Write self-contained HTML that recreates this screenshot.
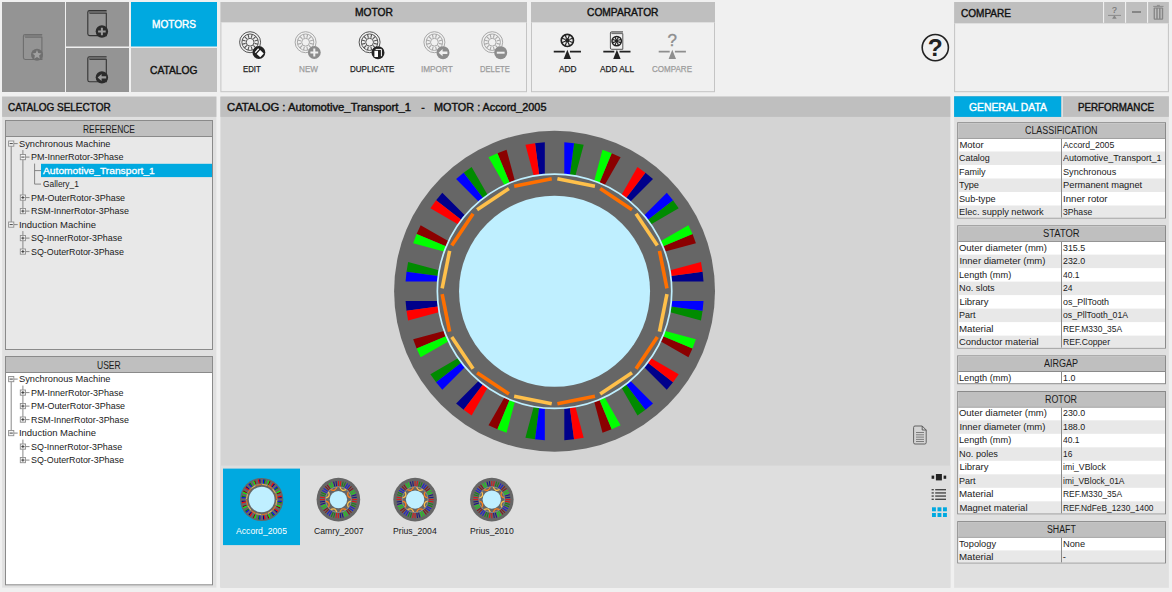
<!DOCTYPE html><html><head><meta charset="utf-8"><title>Motor Catalog</title><style>html,body{margin:0;padding:0}body{width:1172px;height:592px;overflow:hidden;position:relative;background:#f0f0f0;font-family:"Liberation Sans",sans-serif}body>div,body>span,body>svg{position:absolute;display:block;box-sizing:content-box}body>span{white-space:pre;transform-origin:0 0}</style></head><body>
<svg style="left:0;top:0" width="1172" height="592" viewBox="0 0 1172 592"><rect x="2" y="2" width="63" height="90" fill="#949494"/><rect x="66" y="2" width="63" height="44.5" fill="#949494"/><rect x="66" y="48" width="63" height="44" fill="#949494"/><rect x="131" y="2" width="86" height="44.5" fill="#00a9e0"/><rect x="131" y="48" width="86" height="44" fill="#bfbfbf"/><rect x="220.4" y="2" width="306.6" height="20.5" fill="#bfbfbf"/><rect x="220.4" y="22.5" width="306.6" height="69.7" fill="#c4c4c4"/><rect x="221.4" y="22.5" width="304.6" height="68.7" fill="#f0f0f0"/><rect x="531" y="2" width="184" height="20.5" fill="#bfbfbf"/><rect x="531" y="22.5" width="184" height="69.7" fill="#c4c4c4"/><rect x="532" y="22.5" width="182" height="68.7" fill="#f0f0f0"/><rect x="954.1" y="2" width="214.8" height="21.5" fill="#bfbfbf"/><rect x="954.1" y="23.5" width="214.8" height="68.7" fill="#c4c4c4"/><rect x="955.1" y="23.5" width="212.8" height="67.7" fill="#f0f0f0"/><rect x="1103" y="2" width="1.1" height="20.8" fill="#f0f0f0"/><rect x="1125" y="2" width="1.1" height="20.8" fill="#f0f0f0"/><rect x="1147" y="2" width="1.1" height="20.8" fill="#f0f0f0"/><rect x="2.1" y="96.6" width="214.3" height="491" fill="#e0e0e0"/><rect x="2.1" y="96.6" width="214.3" height="20.3" fill="#bfbfbf"/><rect x="5" y="120" width="208" height="230" fill="#8a8a8a"/><rect x="6" y="121" width="206" height="228" fill="#e8e8e8"/><rect x="6" y="121" width="206" height="15" fill="#bfbfbf"/><rect x="6" y="136" width="206" height="1" fill="#8a8a8a"/><rect x="5" y="356" width="208" height="229.3" fill="#8a8a8a"/><rect x="6" y="357" width="206" height="227.3" fill="#fff"/><rect x="6" y="357" width="206" height="15" fill="#bfbfbf"/><rect x="6" y="372" width="206" height="1" fill="#8a8a8a"/><rect x="41" y="163.8" width="171" height="13.3" fill="#00a9e0"/><rect x="220.4" y="96.6" width="729.9" height="491" fill="#d4d4d4"/><rect x="220.4" y="96.6" width="729.9" height="20.3" fill="#bfbfbf"/><rect x="220.4" y="465.6" width="729.9" height="122" fill="#dedede"/><rect x="223" y="468.6" width="77" height="76.5" fill="#00a9e0"/><rect x="954.1" y="96.3" width="214.8" height="491.5" fill="#e0e0e0"/><rect x="954.1" y="96.3" width="214.8" height="20.6" fill="#bfbfbf"/><rect x="954.1" y="96.3" width="107.3" height="20.6" fill="#00a9e0"/><rect x="1061.4" y="96.3" width="1.6" height="20.6" fill="#e0e0e0"/><rect x="957.2" y="122.2" width="208.8" height="96.3" fill="#8a8a8a"/><rect x="958.2" y="123.2" width="206.8" height="94.3" fill="#fff"/><rect x="958.2" y="151.5" width="206.8" height="13.5" fill="#e8e8e8"/><rect x="958.2" y="178.5" width="206.8" height="13.5" fill="#e8e8e8"/><rect x="958.2" y="205.5" width="206.8" height="12" fill="#e8e8e8"/><rect x="958.2" y="123.2" width="206.8" height="14.6" fill="#bfbfbf"/><rect x="958.2" y="137.8" width="206.8" height="1" fill="#8a8a8a"/><rect x="1061" y="138.8" width="1" height="78.7" fill="#8a8a8a"/><rect x="957.2" y="225.3" width="208.8" height="123.3" fill="#8a8a8a"/><rect x="958.2" y="226.3" width="206.8" height="121.3" fill="#fff"/><rect x="958.2" y="254.6" width="206.8" height="13.5" fill="#e8e8e8"/><rect x="958.2" y="281.6" width="206.8" height="13.5" fill="#e8e8e8"/><rect x="958.2" y="308.6" width="206.8" height="13.5" fill="#e8e8e8"/><rect x="958.2" y="335.6" width="206.8" height="12" fill="#e8e8e8"/><rect x="958.2" y="226.3" width="206.8" height="14.6" fill="#bfbfbf"/><rect x="958.2" y="240.9" width="206.8" height="1" fill="#8a8a8a"/><rect x="1061" y="241.9" width="1" height="105.7" fill="#8a8a8a"/><rect x="957.2" y="355.4" width="208.8" height="28.8" fill="#8a8a8a"/><rect x="958.2" y="356.4" width="206.8" height="26.8" fill="#fff"/><rect x="958.2" y="356.4" width="206.8" height="14.6" fill="#bfbfbf"/><rect x="958.2" y="371" width="206.8" height="1" fill="#8a8a8a"/><rect x="1061" y="372" width="1" height="11.2" fill="#8a8a8a"/><rect x="957.2" y="391" width="208.8" height="123.3" fill="#8a8a8a"/><rect x="958.2" y="392" width="206.8" height="121.3" fill="#fff"/><rect x="958.2" y="420.3" width="206.8" height="13.5" fill="#e8e8e8"/><rect x="958.2" y="447.3" width="206.8" height="13.5" fill="#e8e8e8"/><rect x="958.2" y="474.3" width="206.8" height="13.5" fill="#e8e8e8"/><rect x="958.2" y="501.3" width="206.8" height="12" fill="#e8e8e8"/><rect x="958.2" y="392" width="206.8" height="14.6" fill="#bfbfbf"/><rect x="958.2" y="406.6" width="206.8" height="1" fill="#8a8a8a"/><rect x="1061" y="407.6" width="1" height="105.7" fill="#8a8a8a"/><rect x="957.2" y="521.1" width="208.8" height="42.3" fill="#8a8a8a"/><rect x="958.2" y="522.1" width="206.8" height="40.3" fill="#fff"/><rect x="958.2" y="550.4" width="206.8" height="12" fill="#e8e8e8"/><rect x="958.2" y="522.1" width="206.8" height="14.6" fill="#bfbfbf"/><rect x="958.2" y="536.7" width="206.8" height="1" fill="#8a8a8a"/><rect x="1061" y="537.7" width="1" height="24.7" fill="#8a8a8a"/></svg>
<span style="left:151.90px;top:17.36px;font-size:10.5px;line-height:14px;color:#fff;transform:scaleX(0.9588);-webkit-text-stroke:0.4px #fff;">MOTORS</span>
<span style="left:150.00px;top:63.36px;font-size:10.5px;line-height:14px;color:#111;transform:scaleX(0.9770);-webkit-text-stroke:0.4px #111;">CATALOG</span>
<svg style="left:0;top:0" width="220" height="95" viewBox="0 0 220 95"><path d="M42.20 34.50 H25.10 Q23.40 34.50 23.40 36.20 V57.60 Q23.40 59.50 25.30 59.50 H41.90 V37.20 H25.10" fill="none" stroke="#6e6e6e" stroke-width="1.1"/><rect x="24.50" y="34.90" width="17.60" height="2.1" fill="#7d7d7d"/><circle cx="37" cy="54.8" r="6" fill="#6e6e6e"/><polygon points="37.00,50.10 38.29,53.12 41.57,53.42 39.09,55.58 39.82,58.78 37.00,57.10 34.18,58.78 34.91,55.58 32.43,53.42 35.71,53.12" fill="#a0a0a0"/><path d="M106.60 10.60 H89.50 Q87.80 10.60 87.80 12.30 V33.70 Q87.80 35.60 89.70 35.60 H106.30 V13.30 H89.50" fill="none" stroke="#333" stroke-width="1.1"/><rect x="88.90" y="11.00" width="17.60" height="2.1" fill="#666"/><circle cx="101.9" cy="31.5" r="6.2" fill="#2b2b2b"/><path d="M98.1 31.5 H105.7 M101.9 27.7 V35.3" stroke="#9a9a9a" stroke-width="2" fill="none"/><path d="M106.60 56.80 H89.50 Q87.80 56.80 87.80 58.50 V79.90 Q87.80 81.80 89.70 81.80 H106.30 V59.50 H89.50" fill="none" stroke="#333" stroke-width="1.1"/><rect x="88.90" y="57.20" width="17.60" height="2.1" fill="#666"/><circle cx="101.9" cy="77.4" r="6.2" fill="#2b2b2b"/><path d="M97.6 77.4 L101.6 73.9 V76.2 H106.2 V78.6 H101.6 V80.9 Z" fill="#9a9a9a"/></svg>
<span style="left:355.00px;top:5.36px;font-size:10.5px;line-height:14px;color:#111;transform:scaleX(0.9772);-webkit-text-stroke:0.4px #111;">MOTOR</span>
<span style="left:587.00px;top:5.36px;font-size:10.5px;line-height:14px;color:#111;transform:scaleX(0.9727);-webkit-text-stroke:0.4px #111;">COMPARATOR</span>
<span style="left:243.00px;top:61.88px;font-size:9px;line-height:14px;color:#222;transform:scaleX(0.8658);-webkit-text-stroke:0.25px #222;">EDIT</span>
<span style="left:298.75px;top:61.88px;font-size:9px;line-height:14px;color:#9c9c9c;transform:scaleX(0.9049);-webkit-text-stroke:0.25px #9c9c9c;">NEW</span>
<span style="left:350.00px;top:61.88px;font-size:9px;line-height:14px;color:#222;transform:scaleX(0.8908);-webkit-text-stroke:0.25px #222;">DUPLICATE</span>
<span style="left:421.25px;top:61.88px;font-size:9px;line-height:14px;color:#9c9c9c;transform:scaleX(0.9114);-webkit-text-stroke:0.25px #9c9c9c;">IMPORT</span>
<span style="left:480.00px;top:61.88px;font-size:9px;line-height:14px;color:#9c9c9c;transform:scaleX(0.8497);-webkit-text-stroke:0.25px #9c9c9c;">DELETE</span>
<span style="left:558.50px;top:61.88px;font-size:9px;line-height:14px;color:#222;transform:scaleX(0.9209);-webkit-text-stroke:0.25px #222;">ADD</span>
<span style="left:599.75px;top:61.88px;font-size:9px;line-height:14px;color:#222;transform:scaleX(0.9184);-webkit-text-stroke:0.25px #222;">ADD ALL</span>
<span style="left:652.00px;top:61.88px;font-size:9px;line-height:14px;color:#9c9c9c;transform:scaleX(0.8921);-webkit-text-stroke:0.25px #9c9c9c;">COMPARE</span>
<svg style="left:220px;top:22px" width="500" height="70" viewBox="220 22 500 70"><g fill="none" stroke="#555" stroke-width="1"><circle cx="250.1" cy="42.2" r="10.5"/><circle cx="250.1" cy="42.2" r="8.2"/><circle cx="250.1" cy="42.2" r="3.9"/><path d="M254.54 43.39 L258.02 44.32 M253.35 45.45 L255.90 48.00 M251.29 46.64 L252.22 50.12 M248.91 46.64 L247.98 50.12 M246.85 45.45 L244.30 48.00 M245.66 43.39 L242.18 44.32 M245.66 41.01 L242.18 40.08 M246.85 38.95 L244.30 36.40 M248.91 37.76 L247.98 34.28 M251.29 37.76 L252.22 34.28 M253.35 38.95 L255.90 36.40 M254.54 41.01 L258.02 40.08 " stroke-width="1.1"/></g><circle cx="258.9" cy="52.5" r="6.4" fill="#222"/><g transform="rotate(42 258.9 52.5)"><rect x="258.2" y="49.9" width="4.9" height="5.2" fill="#fff"/><rect x="255.6" y="49.9" width="1.3" height="5.2" fill="#fff"/></g><g fill="none" stroke="#a8a8a8" stroke-width="1"><circle cx="305.6" cy="42.2" r="10.5"/><circle cx="305.6" cy="42.2" r="8.2"/><circle cx="305.6" cy="42.2" r="3.9"/><path d="M310.04 43.39 L313.52 44.32 M308.85 45.45 L311.40 48.00 M306.79 46.64 L307.72 50.12 M304.41 46.64 L303.48 50.12 M302.35 45.45 L299.80 48.00 M301.16 43.39 L297.68 44.32 M301.16 41.01 L297.68 40.08 M302.35 38.95 L299.80 36.40 M304.41 37.76 L303.48 34.28 M306.79 37.76 L307.72 34.28 M308.85 38.95 L311.40 36.40 M310.04 41.01 L313.52 40.08 " stroke-width="1.1"/></g><circle cx="314.3" cy="52.5" r="6.4" fill="#8c8c8c"/><path d="M310.4 52.5 H318.2 M314.3 48.6 V56.4" stroke="#f0f0f0" stroke-width="2" fill="none"/><g fill="none" stroke="#555" stroke-width="1"><circle cx="369.6" cy="42.2" r="10.5"/><circle cx="369.6" cy="42.2" r="8.2"/><circle cx="369.6" cy="42.2" r="3.9"/><path d="M374.04 43.39 L377.52 44.32 M372.85 45.45 L375.40 48.00 M370.79 46.64 L371.72 50.12 M368.41 46.64 L367.48 50.12 M366.35 45.45 L363.80 48.00 M365.16 43.39 L361.68 44.32 M365.16 41.01 L361.68 40.08 M366.35 38.95 L363.80 36.40 M368.41 37.76 L367.48 34.28 M370.79 37.76 L371.72 34.28 M372.85 38.95 L375.40 36.40 M374.04 41.01 L377.52 40.08 " stroke-width="1.1"/></g><circle cx="378" cy="52.7" r="6.5" fill="#222"/><rect x="374.4" y="50.8" width="3.6" height="6.2" fill="#fff"/><path d="M375.6 49.4 H381.4 V56.2" stroke="#fff" stroke-width="1" fill="none"/><g fill="none" stroke="#a8a8a8" stroke-width="1"><circle cx="434.4" cy="42.2" r="10.5"/><circle cx="434.4" cy="42.2" r="8.2"/><circle cx="434.4" cy="42.2" r="3.9"/><path d="M438.84 43.39 L442.32 44.32 M437.65 45.45 L440.20 48.00 M435.59 46.64 L436.52 50.12 M433.21 46.64 L432.28 50.12 M431.15 45.45 L428.60 48.00 M429.96 43.39 L426.48 44.32 M429.96 41.01 L426.48 40.08 M431.15 38.95 L428.60 36.40 M433.21 37.76 L432.28 34.28 M435.59 37.76 L436.52 34.28 M437.65 38.95 L440.20 36.40 M438.84 41.01 L442.32 40.08 " stroke-width="1.1"/></g><circle cx="443" cy="52.7" r="6.5" fill="#8c8c8c"/><path d="M438.6 52.7 L442.6 49.1 V51.5 H447.4 V53.9 H442.6 V56.3 Z" fill="#f0f0f0"/><g fill="none" stroke="#a8a8a8" stroke-width="1"><circle cx="492.2" cy="42.2" r="10.5"/><circle cx="492.2" cy="42.2" r="8.2"/><circle cx="492.2" cy="42.2" r="3.9"/><path d="M496.64 43.39 L500.12 44.32 M495.45 45.45 L498.00 48.00 M493.39 46.64 L494.32 50.12 M491.01 46.64 L490.08 50.12 M488.95 45.45 L486.40 48.00 M487.76 43.39 L484.28 44.32 M487.76 41.01 L484.28 40.08 M488.95 38.95 L486.40 36.40 M491.01 37.76 L490.08 34.28 M493.39 37.76 L494.32 34.28 M495.45 38.95 L498.00 36.40 M496.64 41.01 L500.12 40.08 " stroke-width="1.1"/></g><circle cx="500.7" cy="52.7" r="6.5" fill="#8c8c8c"/><path d="M496.8 52.7 H504.6" stroke="#f0f0f0" stroke-width="2" fill="none"/><circle cx="567.35" cy="40.4" r="6.1" fill="none" stroke="#222" stroke-width="1.7"/><path d="M569.47 41.28 L572.99 42.73 M568.23 42.52 L569.68 46.04 M566.47 42.52 L565.02 46.04 M565.23 41.28 L561.71 42.73 M565.23 39.52 L561.71 38.07 M566.47 38.28 L565.02 34.76 M568.23 38.28 L569.68 34.76 M569.47 39.52 L572.99 38.07 " stroke="#222" stroke-width="1.15" fill="none"/><circle cx="567.35" cy="40.4" r="2.3" fill="#222"/><path d="M553.75 51.7 H564.75 M569.95 51.7 H580.95" stroke="#222" stroke-width="1.7" fill="none"/><path d="M567.35 49.8 L571.0500000000001 59 H563.65Z" fill="#222"/><path d="M623 31.8 H611.6 Q610.4 31.8 610.4 33 V48 Q610.4 49.3 611.7 49.3 H622.8 V33.6 H611.6" fill="none" stroke="#444" stroke-width="0.9"/><rect x="611" y="32.2" width="11.8" height="1.2" fill="#888"/><circle cx="616.7" cy="41.1" r="4.7" fill="none" stroke="#222" stroke-width="1.5"/><path d="M618.55 41.87 L621.04 42.90 M617.47 42.95 L618.50 45.44 M615.93 42.95 L614.90 45.44 M614.85 41.87 L612.36 42.90 M614.85 40.33 L612.36 39.30 M615.93 39.25 L614.90 36.76 M617.47 39.25 L618.50 36.76 M618.55 40.33 L621.04 39.30 " stroke="#222" stroke-width="1.15" fill="none"/><circle cx="616.7" cy="41.1" r="2.0" fill="#222"/><path d="M603.3 51.7 H614.3 M619.5 51.7 H630.5" stroke="#222" stroke-width="1.7" fill="none"/><path d="M616.9 49.8 L620.6 59 H613.1999999999999Z" fill="#222"/><path d="M658.6999999999999 51.7 H669.6999999999999 M674.9 51.7 H685.9" stroke="#8e8e8e" stroke-width="1.7" fill="none"/><path d="M672.3 49.8 L676.0 59 H668.5999999999999Z" fill="#8e8e8e"/></svg>
<span style="left:667.57px;top:34.41px;font-size:17px;line-height:14px;color:#8e8e8e;-webkit-text-stroke:0.35px #8e8e8e;">?</span>
<svg style="left:918px;top:30px" width="36" height="36" viewBox="918 30 36 36"><circle cx="935.3" cy="47.6" r="13.1" fill="none" stroke="#222" stroke-width="1.6"/></svg>
<span style="left:927.82px;top:40.91px;font-size:24.5px;line-height:14px;color:#222;font-weight:bold;">?</span>
<span style="left:960.60px;top:5.76px;font-size:10.5px;line-height:14px;color:#111;transform:scaleX(0.9558);-webkit-text-stroke:0.4px #111;">COMPARE</span>
<svg style="left:1100px;top:2px" width="70" height="22" viewBox="1100 2 70 22"><path d="M1108 15.4 H1121" stroke="#868686" stroke-width="0.9" fill="none"/><path d="M1114.4 15.2 L1116.7 18.8 H1112.1Z" fill="#868686"/><path d="M1132 12 H1141" stroke="#868686" stroke-width="2" fill="none"/><path d="M1153.2 6.4 H1163.5 M1156.9 5.4 H1159.8" stroke="#868686" stroke-width="0.9" fill="none"/><rect x="1153.6" y="7.6" width="9.6" height="12.1" rx="1" fill="#868686"/><rect x="1154.9499999999998" y="8.6" width="1.3" height="9.9" fill="#bfbfbf"/><rect x="1157.75" y="8.6" width="1.3" height="9.9" fill="#bfbfbf"/><rect x="1160.55" y="8.6" width="1.3" height="9.9" fill="#bfbfbf"/></svg>
<span style="left:1112.01px;top:3.32px;font-size:8.6px;line-height:14px;color:#777;-webkit-text-stroke:0.2px #777;">?</span>
<span style="left:8.00px;top:100.36px;font-size:10.5px;line-height:14px;color:#111;transform:scaleX(0.9505);-webkit-text-stroke:0.4px #111;">CATALOG SELECTOR</span>
<span style="left:83.00px;top:122.83px;font-size:10.3px;line-height:14px;color:#1a1a1a;transform:scaleX(0.8185);">REFERENCE</span>
<span style="left:97.25px;top:358.83px;font-size:10.3px;line-height:14px;color:#1a1a1a;transform:scaleX(0.8299);">USER</span>
<svg style="left:0;top:0" width="220" height="592" viewBox="0 0 220 592"><path d="M13.80 143.60 H17.70" stroke="#7a7a7a" stroke-width="0.9"/><path d="M25.50 157.10 H29.50" stroke="#7a7a7a" stroke-width="0.9"/><path d="M34.60 170.60 H41.00" stroke="#7a7a7a" stroke-width="0.9"/><path d="M34.60 184.10 H41.00" stroke="#7a7a7a" stroke-width="0.9"/><path d="M25.50 197.60 H29.50" stroke="#7a7a7a" stroke-width="0.9"/><path d="M25.50 211.10 H29.50" stroke="#7a7a7a" stroke-width="0.9"/><path d="M13.80 224.60 H17.70" stroke="#7a7a7a" stroke-width="0.9"/><path d="M25.50 238.10 H29.50" stroke="#7a7a7a" stroke-width="0.9"/><path d="M25.50 251.60 H29.50" stroke="#7a7a7a" stroke-width="0.9"/><path d="M11.2 143.60 V224.60" stroke="#7a7a7a" stroke-width="0.9"/><path d="M22.9 150.10 V211.10" stroke="#7a7a7a" stroke-width="0.9"/><path d="M22.9 231.10 V251.60" stroke="#7a7a7a" stroke-width="0.9"/><path d="M34.6 163.60 V184.10" stroke="#7a7a7a" stroke-width="0.9"/><rect x="8.60" y="141.00" width="5.2" height="5.2" fill="#f4f4f4" stroke="#8e8e8e" stroke-width="0.9"/><path d="M9.60 143.60 H12.80" stroke="#333" stroke-width="0.9"/><rect x="20.30" y="154.50" width="5.2" height="5.2" fill="#f4f4f4" stroke="#8e8e8e" stroke-width="0.9"/><path d="M21.30 157.10 H24.50" stroke="#333" stroke-width="0.9"/><rect x="20.30" y="195.00" width="5.2" height="5.2" fill="#f4f4f4" stroke="#8e8e8e" stroke-width="0.9"/><path d="M21.30 197.60 H24.50" stroke="#333" stroke-width="0.9"/><path d="M22.90 196.00 V199.20" stroke="#333" stroke-width="0.9"/><rect x="20.30" y="208.50" width="5.2" height="5.2" fill="#f4f4f4" stroke="#8e8e8e" stroke-width="0.9"/><path d="M21.30 211.10 H24.50" stroke="#333" stroke-width="0.9"/><path d="M22.90 209.50 V212.70" stroke="#333" stroke-width="0.9"/><rect x="8.60" y="222.00" width="5.2" height="5.2" fill="#f4f4f4" stroke="#8e8e8e" stroke-width="0.9"/><path d="M9.60 224.60 H12.80" stroke="#333" stroke-width="0.9"/><rect x="20.30" y="235.50" width="5.2" height="5.2" fill="#f4f4f4" stroke="#8e8e8e" stroke-width="0.9"/><path d="M21.30 238.10 H24.50" stroke="#333" stroke-width="0.9"/><path d="M22.90 236.50 V239.70" stroke="#333" stroke-width="0.9"/><rect x="20.30" y="249.00" width="5.2" height="5.2" fill="#f4f4f4" stroke="#8e8e8e" stroke-width="0.9"/><path d="M21.30 251.60 H24.50" stroke="#333" stroke-width="0.9"/><path d="M22.90 250.00 V253.20" stroke="#333" stroke-width="0.9"/></svg>
<span style="left:18.90px;top:136.51px;font-size:9.5px;line-height:14px;color:#1a1a1a;transform:scaleX(0.9734);">Synchronous Machine</span>
<span style="left:30.70px;top:150.01px;font-size:9.5px;line-height:14px;color:#1a1a1a;transform:scaleX(0.9469);">PM-InnerRotor-3Phase</span>
<span style="left:43.00px;top:163.51px;font-size:9.5px;line-height:14px;color:#fff;transform:scaleX(1.0783);-webkit-text-stroke:0.3px #fff;">Automotive_Transport_1</span>
<span style="left:43.00px;top:177.01px;font-size:9.5px;line-height:14px;color:#1a1a1a;transform:scaleX(0.8817);">Gallery_1</span>
<span style="left:30.70px;top:190.51px;font-size:9.5px;line-height:14px;color:#1a1a1a;transform:scaleX(0.9430);">PM-OuterRotor-3Phase</span>
<span style="left:30.70px;top:204.01px;font-size:9.5px;line-height:14px;color:#1a1a1a;transform:scaleX(0.9364);">RSM-InnerRotor-3Phase</span>
<span style="left:18.90px;top:217.51px;font-size:9.5px;line-height:14px;color:#1a1a1a;">Induction Machine</span>
<span style="left:30.70px;top:231.01px;font-size:9.5px;line-height:14px;color:#1a1a1a;transform:scaleX(0.9387);">SQ-InnerRotor-3Phase</span>
<span style="left:30.70px;top:244.51px;font-size:9.5px;line-height:14px;color:#1a1a1a;transform:scaleX(0.9359);">SQ-OuterRotor-3Phase</span>
<svg style="left:0;top:0" width="220" height="592" viewBox="0 0 220 592"><path d="M13.80 379.10 H17.70" stroke="#7a7a7a" stroke-width="0.9"/><path d="M25.50 392.60 H29.50" stroke="#7a7a7a" stroke-width="0.9"/><path d="M25.50 406.10 H29.50" stroke="#7a7a7a" stroke-width="0.9"/><path d="M25.50 419.60 H29.50" stroke="#7a7a7a" stroke-width="0.9"/><path d="M13.80 433.10 H17.70" stroke="#7a7a7a" stroke-width="0.9"/><path d="M25.50 446.60 H29.50" stroke="#7a7a7a" stroke-width="0.9"/><path d="M25.50 460.10 H29.50" stroke="#7a7a7a" stroke-width="0.9"/><path d="M11.2 379.10 V433.10" stroke="#7a7a7a" stroke-width="0.9"/><path d="M22.9 385.60 V419.60" stroke="#7a7a7a" stroke-width="0.9"/><path d="M22.9 439.60 V460.10" stroke="#7a7a7a" stroke-width="0.9"/><rect x="8.60" y="376.50" width="5.2" height="5.2" fill="#f4f4f4" stroke="#8e8e8e" stroke-width="0.9"/><path d="M9.60 379.10 H12.80" stroke="#333" stroke-width="0.9"/><rect x="20.30" y="390.00" width="5.2" height="5.2" fill="#f4f4f4" stroke="#8e8e8e" stroke-width="0.9"/><path d="M21.30 392.60 H24.50" stroke="#333" stroke-width="0.9"/><path d="M22.90 391.00 V394.20" stroke="#333" stroke-width="0.9"/><rect x="20.30" y="403.50" width="5.2" height="5.2" fill="#f4f4f4" stroke="#8e8e8e" stroke-width="0.9"/><path d="M21.30 406.10 H24.50" stroke="#333" stroke-width="0.9"/><path d="M22.90 404.50 V407.70" stroke="#333" stroke-width="0.9"/><rect x="20.30" y="417.00" width="5.2" height="5.2" fill="#f4f4f4" stroke="#8e8e8e" stroke-width="0.9"/><path d="M21.30 419.60 H24.50" stroke="#333" stroke-width="0.9"/><path d="M22.90 418.00 V421.20" stroke="#333" stroke-width="0.9"/><rect x="8.60" y="430.50" width="5.2" height="5.2" fill="#f4f4f4" stroke="#8e8e8e" stroke-width="0.9"/><path d="M9.60 433.10 H12.80" stroke="#333" stroke-width="0.9"/><rect x="20.30" y="444.00" width="5.2" height="5.2" fill="#f4f4f4" stroke="#8e8e8e" stroke-width="0.9"/><path d="M21.30 446.60 H24.50" stroke="#333" stroke-width="0.9"/><path d="M22.90 445.00 V448.20" stroke="#333" stroke-width="0.9"/><rect x="20.30" y="457.50" width="5.2" height="5.2" fill="#f4f4f4" stroke="#8e8e8e" stroke-width="0.9"/><path d="M21.30 460.10 H24.50" stroke="#333" stroke-width="0.9"/><path d="M22.90 458.50 V461.70" stroke="#333" stroke-width="0.9"/></svg>
<span style="left:18.90px;top:372.01px;font-size:9.5px;line-height:14px;color:#1a1a1a;transform:scaleX(0.9734);">Synchronous Machine</span>
<span style="left:30.70px;top:385.51px;font-size:9.5px;line-height:14px;color:#1a1a1a;transform:scaleX(0.9469);">PM-InnerRotor-3Phase</span>
<span style="left:30.70px;top:399.01px;font-size:9.5px;line-height:14px;color:#1a1a1a;transform:scaleX(0.9430);">PM-OuterRotor-3Phase</span>
<span style="left:30.70px;top:412.51px;font-size:9.5px;line-height:14px;color:#1a1a1a;transform:scaleX(0.9364);">RSM-InnerRotor-3Phase</span>
<span style="left:18.90px;top:426.01px;font-size:9.5px;line-height:14px;color:#1a1a1a;">Induction Machine</span>
<span style="left:30.70px;top:439.51px;font-size:9.5px;line-height:14px;color:#1a1a1a;transform:scaleX(0.9387);">SQ-InnerRotor-3Phase</span>
<span style="left:30.70px;top:453.01px;font-size:9.5px;line-height:14px;color:#1a1a1a;transform:scaleX(0.9359);">SQ-OuterRotor-3Phase</span>
<span style="left:227.00px;top:100.36px;font-size:10.5px;line-height:14px;color:#111;transform:scaleX(1.0736);-webkit-text-stroke:0.4px #111;">CATALOG : Automotive_Transport_1</span>
<span style="left:421.20px;top:100.36px;font-size:10.5px;line-height:14px;color:#111;-webkit-text-stroke:0.4px #111;">-</span>
<span style="left:434.40px;top:100.36px;font-size:10.5px;line-height:14px;color:#111;transform:scaleX(1.0318);-webkit-text-stroke:0.4px #111;">MOTOR : Accord_2005</span>
<svg style="left:380px;top:120px" width="350" height="345" viewBox="380 120 350 345"><circle cx="554.55" cy="291.25" r="160.45" fill="#666"/><polygon points="671.75,281.50 703.53,281.50 702.57,271.76 671.14,275.90" fill="#00008b"/><polygon points="671.14,275.90 702.57,271.76 700.98,262.11 670.28,270.34" fill="#ff0000"/><polygon points="665.23,251.50 695.93,243.27 692.49,234.12 663.20,246.25" fill="#8b0000"/><polygon points="663.20,246.25 692.49,234.12 688.45,225.20 660.92,241.10" fill="#00ff00"/><polygon points="651.17,224.21 678.70,208.32 673.00,200.36 647.85,219.66" fill="#008b00"/><polygon points="647.85,219.66 673.00,200.36 666.79,192.80 644.31,215.27" fill="#0000ff"/><polygon points="630.53,201.49 653.00,179.01 645.44,172.80 626.14,197.95" fill="#00008b"/><polygon points="626.14,197.95 645.44,172.80 637.48,167.10 621.59,194.63" fill="#ff0000"/><polygon points="604.70,184.88 620.60,157.35 611.68,153.31 599.55,182.60" fill="#8b0000"/><polygon points="599.55,182.60 611.68,153.31 602.53,149.87 594.30,180.57" fill="#00ff00"/><polygon points="575.46,175.52 583.69,144.82 574.04,143.23 569.90,174.66" fill="#008b00"/><polygon points="569.90,174.66 574.04,143.23 564.30,142.27 564.30,174.05" fill="#0000ff"/><polygon points="544.80,174.05 544.80,142.27 535.06,143.23 539.20,174.66" fill="#00008b"/><polygon points="539.20,174.66 535.06,143.23 525.41,144.82 533.64,175.52" fill="#ff0000"/><polygon points="514.80,180.57 506.57,149.87 497.42,153.31 509.55,182.60" fill="#8b0000"/><polygon points="509.55,182.60 497.42,153.31 488.50,157.35 504.40,184.88" fill="#00ff00"/><polygon points="487.51,194.63 471.62,167.10 463.66,172.80 482.96,197.95" fill="#008b00"/><polygon points="482.96,197.95 463.66,172.80 456.10,179.01 478.57,201.49" fill="#0000ff"/><polygon points="464.79,215.27 442.31,192.80 436.10,200.36 461.25,219.66" fill="#00008b"/><polygon points="461.25,219.66 436.10,200.36 430.40,208.32 457.93,224.21" fill="#ff0000"/><polygon points="448.18,241.10 420.65,225.20 416.61,234.12 445.90,246.25" fill="#8b0000"/><polygon points="445.90,246.25 416.61,234.12 413.17,243.27 443.87,251.50" fill="#00ff00"/><polygon points="438.82,270.34 408.12,262.11 406.53,271.76 437.96,275.90" fill="#008b00"/><polygon points="437.96,275.90 406.53,271.76 405.57,281.50 437.35,281.50" fill="#0000ff"/><polygon points="437.35,301.00 405.57,301.00 406.53,310.74 437.96,306.60" fill="#00008b"/><polygon points="437.96,306.60 406.53,310.74 408.12,320.39 438.82,312.16" fill="#ff0000"/><polygon points="443.87,331.00 413.17,339.23 416.61,348.38 445.90,336.25" fill="#8b0000"/><polygon points="445.90,336.25 416.61,348.38 420.65,357.30 448.18,341.40" fill="#00ff00"/><polygon points="457.93,358.29 430.40,374.18 436.10,382.14 461.25,362.84" fill="#008b00"/><polygon points="461.25,362.84 436.10,382.14 442.31,389.70 464.79,367.23" fill="#0000ff"/><polygon points="478.57,381.01 456.10,403.49 463.66,409.70 482.96,384.55" fill="#00008b"/><polygon points="482.96,384.55 463.66,409.70 471.62,415.40 487.51,387.87" fill="#ff0000"/><polygon points="504.40,397.62 488.50,425.15 497.42,429.19 509.55,399.90" fill="#8b0000"/><polygon points="509.55,399.90 497.42,429.19 506.57,432.63 514.80,401.93" fill="#00ff00"/><polygon points="533.64,406.98 525.41,437.68 535.06,439.27 539.20,407.84" fill="#008b00"/><polygon points="539.20,407.84 535.06,439.27 544.80,440.23 544.80,408.45" fill="#0000ff"/><polygon points="564.30,408.45 564.30,440.23 574.04,439.27 569.90,407.84" fill="#00008b"/><polygon points="569.90,407.84 574.04,439.27 583.69,437.68 575.46,406.98" fill="#ff0000"/><polygon points="594.30,401.93 602.53,432.63 611.68,429.19 599.55,399.90" fill="#8b0000"/><polygon points="599.55,399.90 611.68,429.19 620.60,425.15 604.70,397.62" fill="#00ff00"/><polygon points="621.59,387.87 637.48,415.40 645.44,409.70 626.14,384.55" fill="#008b00"/><polygon points="626.14,384.55 645.44,409.70 653.00,403.49 630.53,381.01" fill="#0000ff"/><polygon points="644.31,367.23 666.79,389.70 673.00,382.14 647.85,362.84" fill="#00008b"/><polygon points="647.85,362.84 673.00,382.14 678.70,374.18 651.17,358.29" fill="#ff0000"/><polygon points="660.92,341.40 688.45,357.30 692.49,348.38 663.20,336.25" fill="#8b0000"/><polygon points="663.20,336.25 692.49,348.38 695.93,339.23 665.23,331.00" fill="#00ff00"/><polygon points="670.28,312.16 700.98,320.39 702.57,310.74 671.14,306.60" fill="#008b00"/><polygon points="671.14,306.60 702.57,310.74 703.53,301.00 671.75,301.00" fill="#0000ff"/><circle cx="554.55" cy="291.25" r="117.20" fill="none" stroke="#bfefff" stroke-width="1.70"/><rect x="663.55" y="272.10" width="3.60" height="38.30" fill="#ff6f00" transform="rotate(-11.25 554.55 291.25)"/><rect x="663.55" y="272.10" width="3.60" height="38.30" fill="#ffc04a" transform="rotate(-33.75 554.55 291.25)"/><rect x="663.55" y="272.10" width="3.60" height="38.30" fill="#ff6f00" transform="rotate(-56.25 554.55 291.25)"/><rect x="663.55" y="272.10" width="3.60" height="38.30" fill="#ffc04a" transform="rotate(-78.75 554.55 291.25)"/><rect x="663.55" y="272.10" width="3.60" height="38.30" fill="#ff6f00" transform="rotate(-101.25 554.55 291.25)"/><rect x="663.55" y="272.10" width="3.60" height="38.30" fill="#ffc04a" transform="rotate(-123.75 554.55 291.25)"/><rect x="663.55" y="272.10" width="3.60" height="38.30" fill="#ff6f00" transform="rotate(-146.25 554.55 291.25)"/><rect x="663.55" y="272.10" width="3.60" height="38.30" fill="#ffc04a" transform="rotate(-168.75 554.55 291.25)"/><rect x="663.55" y="272.10" width="3.60" height="38.30" fill="#ff6f00" transform="rotate(-191.25 554.55 291.25)"/><rect x="663.55" y="272.10" width="3.60" height="38.30" fill="#ffc04a" transform="rotate(-213.75 554.55 291.25)"/><rect x="663.55" y="272.10" width="3.60" height="38.30" fill="#ff6f00" transform="rotate(-236.25 554.55 291.25)"/><rect x="663.55" y="272.10" width="3.60" height="38.30" fill="#ffc04a" transform="rotate(-258.75 554.55 291.25)"/><rect x="663.55" y="272.10" width="3.60" height="38.30" fill="#ff6f00" transform="rotate(-281.25 554.55 291.25)"/><rect x="663.55" y="272.10" width="3.60" height="38.30" fill="#ffc04a" transform="rotate(-303.75 554.55 291.25)"/><rect x="663.55" y="272.10" width="3.60" height="38.30" fill="#ff6f00" transform="rotate(-326.25 554.55 291.25)"/><rect x="663.55" y="272.10" width="3.60" height="38.30" fill="#ffc04a" transform="rotate(-348.75 554.55 291.25)"/><circle cx="554.55" cy="291.25" r="95.50" fill="#bfefff"/></svg>
<svg style="left:910px;top:422px" width="22" height="26" viewBox="910 422 22 26"><path d="M915 426 H922.2 L926.2 430 V442.6 Q926.2 444 924.8 444 H915 Q913.6 444 913.6 442.6 V427.4 Q913.6 426 915 426Z M922.2 426 V430 H926.2" fill="none" stroke="#555" stroke-width="0.9"/><path d="M916 432.5 H924 M916 434.8 H924 M916 437.1 H924 M916 439.4 H924 M916 441.5 H924" stroke="#666" stroke-width="0.8"/></svg>
<svg style="left:928px;top:470px" width="22" height="50" viewBox="928 470 22 50"><rect x="935.9" y="474" width="6" height="6.4" fill="#222"/><rect x="931.6" y="475.6" width="2.6" height="3.2" fill="#222"/><rect x="943.6" y="475.6" width="2.6" height="3.2" fill="#222"/><rect x="931.6" y="489.2" width="2.2" height="1.1" fill="#222"/><rect x="935.2" y="489.2" width="10.8" height="1.1" fill="#222"/><rect x="931.6" y="492.4" width="2.2" height="1.1" fill="#222"/><rect x="935.2" y="492.4" width="10.8" height="1.1" fill="#222"/><rect x="931.6" y="495.5" width="2.2" height="1.1" fill="#222"/><rect x="935.2" y="495.5" width="10.8" height="1.1" fill="#222"/><rect x="931.6" y="498.7" width="2.2" height="1.1" fill="#222"/><rect x="935.2" y="498.7" width="10.8" height="1.1" fill="#222"/><rect x="932" y="507.3" width="3.9" height="4" fill="#00a9e0"/><rect x="932" y="513" width="3.9" height="4" fill="#00a9e0"/><rect x="937.5" y="507.3" width="3.9" height="4" fill="#00a9e0"/><rect x="937.5" y="513" width="3.9" height="4" fill="#00a9e0"/><rect x="943" y="507.3" width="3.9" height="4" fill="#00a9e0"/><rect x="943" y="513" width="3.9" height="4" fill="#00a9e0"/></svg>
<svg style="left:223px;top:470px" width="320" height="60" viewBox="223 470 320 60"><circle cx="261.7" cy="499.5" r="21.60" fill="#666"/><polygon points="277.48,498.19 281.76,498.19 281.63,496.88 277.40,497.43" fill="#00008b"/><polygon points="277.40,497.43 281.63,496.88 281.41,495.58 277.28,496.68" fill="#ff0000"/><polygon points="276.60,494.15 280.73,493.04 280.27,491.81 276.33,493.44" fill="#8b0000"/><polygon points="276.33,493.44 280.27,491.81 279.73,490.61 276.02,492.75" fill="#00ff00"/><polygon points="274.71,490.47 278.41,488.34 277.65,487.26 274.26,489.86" fill="#008b00"/><polygon points="274.26,489.86 277.65,487.26 276.81,486.25 273.78,489.27" fill="#0000ff"/><polygon points="271.93,487.42 274.95,484.39 273.94,483.55 271.34,486.94" fill="#00008b"/><polygon points="271.34,486.94 273.94,483.55 272.86,482.79 270.73,486.49" fill="#ff0000"/><polygon points="268.45,485.18 270.59,481.47 269.39,480.93 267.76,484.87" fill="#8b0000"/><polygon points="267.76,484.87 269.39,480.93 268.16,480.47 267.05,484.60" fill="#00ff00"/><polygon points="264.52,483.92 265.62,479.79 264.32,479.57 263.77,483.80" fill="#008b00"/><polygon points="263.77,483.80 264.32,479.57 263.01,479.44 263.01,483.72" fill="#0000ff"/><polygon points="260.39,483.72 260.39,479.44 259.08,479.57 259.63,483.80" fill="#00008b"/><polygon points="259.63,483.80 259.08,479.57 257.78,479.79 258.88,483.92" fill="#ff0000"/><polygon points="256.35,484.60 255.24,480.47 254.01,480.93 255.64,484.87" fill="#8b0000"/><polygon points="255.64,484.87 254.01,480.93 252.81,481.47 254.95,485.18" fill="#00ff00"/><polygon points="252.67,486.49 250.54,482.79 249.46,483.55 252.06,486.94" fill="#008b00"/><polygon points="252.06,486.94 249.46,483.55 248.45,484.39 251.47,487.42" fill="#0000ff"/><polygon points="249.62,489.27 246.59,486.25 245.75,487.26 249.14,489.86" fill="#00008b"/><polygon points="249.14,489.86 245.75,487.26 244.99,488.34 248.69,490.47" fill="#ff0000"/><polygon points="247.38,492.75 243.67,490.61 243.13,491.81 247.07,493.44" fill="#8b0000"/><polygon points="247.07,493.44 243.13,491.81 242.67,493.04 246.80,494.15" fill="#00ff00"/><polygon points="246.12,496.68 241.99,495.58 241.77,496.88 246.00,497.43" fill="#008b00"/><polygon points="246.00,497.43 241.77,496.88 241.64,498.19 245.92,498.19" fill="#0000ff"/><polygon points="245.92,500.81 241.64,500.81 241.77,502.12 246.00,501.57" fill="#00008b"/><polygon points="246.00,501.57 241.77,502.12 241.99,503.42 246.12,502.32" fill="#ff0000"/><polygon points="246.80,504.85 242.67,505.96 243.13,507.19 247.07,505.56" fill="#8b0000"/><polygon points="247.07,505.56 243.13,507.19 243.67,508.39 247.38,506.25" fill="#00ff00"/><polygon points="248.69,508.53 244.99,510.66 245.75,511.74 249.14,509.14" fill="#008b00"/><polygon points="249.14,509.14 245.75,511.74 246.59,512.75 249.62,509.73" fill="#0000ff"/><polygon points="251.47,511.58 248.45,514.61 249.46,515.45 252.06,512.06" fill="#00008b"/><polygon points="252.06,512.06 249.46,515.45 250.54,516.21 252.67,512.51" fill="#ff0000"/><polygon points="254.95,513.82 252.81,517.53 254.01,518.07 255.64,514.13" fill="#8b0000"/><polygon points="255.64,514.13 254.01,518.07 255.24,518.53 256.35,514.40" fill="#00ff00"/><polygon points="258.88,515.08 257.78,519.21 259.08,519.43 259.63,515.20" fill="#008b00"/><polygon points="259.63,515.20 259.08,519.43 260.39,519.56 260.39,515.28" fill="#0000ff"/><polygon points="263.01,515.28 263.01,519.56 264.32,519.43 263.77,515.20" fill="#00008b"/><polygon points="263.77,515.20 264.32,519.43 265.62,519.21 264.52,515.08" fill="#ff0000"/><polygon points="267.05,514.40 268.16,518.53 269.39,518.07 267.76,514.13" fill="#8b0000"/><polygon points="267.76,514.13 269.39,518.07 270.59,517.53 268.45,513.82" fill="#00ff00"/><polygon points="270.73,512.51 272.86,516.21 273.94,515.45 271.34,512.06" fill="#008b00"/><polygon points="271.34,512.06 273.94,515.45 274.95,514.61 271.93,511.58" fill="#0000ff"/><polygon points="273.78,509.73 276.81,512.75 277.65,511.74 274.26,509.14" fill="#00008b"/><polygon points="274.26,509.14 277.65,511.74 278.41,510.66 274.71,508.53" fill="#ff0000"/><polygon points="276.02,506.25 279.73,508.39 280.27,507.19 276.33,505.56" fill="#8b0000"/><polygon points="276.33,505.56 280.27,507.19 280.73,505.96 276.60,504.85" fill="#00ff00"/><polygon points="277.28,502.32 281.41,503.42 281.63,502.12 277.40,501.57" fill="#008b00"/><polygon points="277.40,501.57 281.63,502.12 281.76,500.81 277.48,500.81" fill="#0000ff"/><circle cx="261.7" cy="499.5" r="15.78" fill="none" stroke="#bfefff" stroke-width="0.20"/><rect x="276.22" y="496.92" width="0.80" height="5.16" fill="#ff6f00" transform="rotate(-11.25 261.7 499.5)"/><rect x="276.22" y="496.92" width="0.80" height="5.16" fill="#ffc04a" transform="rotate(-33.75 261.7 499.5)"/><rect x="276.22" y="496.92" width="0.80" height="5.16" fill="#ff6f00" transform="rotate(-56.25 261.7 499.5)"/><rect x="276.22" y="496.92" width="0.80" height="5.16" fill="#ffc04a" transform="rotate(-78.75 261.7 499.5)"/><rect x="276.22" y="496.92" width="0.80" height="5.16" fill="#ff6f00" transform="rotate(-101.25 261.7 499.5)"/><rect x="276.22" y="496.92" width="0.80" height="5.16" fill="#ffc04a" transform="rotate(-123.75 261.7 499.5)"/><rect x="276.22" y="496.92" width="0.80" height="5.16" fill="#ff6f00" transform="rotate(-146.25 261.7 499.5)"/><rect x="276.22" y="496.92" width="0.80" height="5.16" fill="#ffc04a" transform="rotate(-168.75 261.7 499.5)"/><rect x="276.22" y="496.92" width="0.80" height="5.16" fill="#ff6f00" transform="rotate(-191.25 261.7 499.5)"/><rect x="276.22" y="496.92" width="0.80" height="5.16" fill="#ffc04a" transform="rotate(-213.75 261.7 499.5)"/><rect x="276.22" y="496.92" width="0.80" height="5.16" fill="#ff6f00" transform="rotate(-236.25 261.7 499.5)"/><rect x="276.22" y="496.92" width="0.80" height="5.16" fill="#ffc04a" transform="rotate(-258.75 261.7 499.5)"/><rect x="276.22" y="496.92" width="0.80" height="5.16" fill="#ff6f00" transform="rotate(-281.25 261.7 499.5)"/><rect x="276.22" y="496.92" width="0.80" height="5.16" fill="#ffc04a" transform="rotate(-303.75 261.7 499.5)"/><rect x="276.22" y="496.92" width="0.80" height="5.16" fill="#ff6f00" transform="rotate(-326.25 261.7 499.5)"/><rect x="276.22" y="496.92" width="0.80" height="5.16" fill="#ffc04a" transform="rotate(-348.75 261.7 499.5)"/><circle cx="261.7" cy="499.5" r="12.86" fill="#bfefff"/><circle cx="338.4" cy="499.6" r="21.8" fill="#666"/><rect x="351.80" y="499.12" width="5.2" height="0.96" fill="#ff0000" opacity="0.78" transform="rotate(-90.00 338.4 499.6)"/><rect x="351.80" y="499.12" width="5.2" height="0.96" fill="#ff0000" opacity="0.78" transform="rotate(-82.50 338.4 499.6)"/><rect x="351.80" y="499.12" width="5.2" height="0.96" fill="#008b00" opacity="0.78" transform="rotate(-75.00 338.4 499.6)"/><rect x="351.80" y="499.12" width="5.2" height="0.96" fill="#008b00" opacity="0.78" transform="rotate(-67.50 338.4 499.6)"/><rect x="351.80" y="499.12" width="5.2" height="0.96" fill="#0000ff" opacity="0.78" transform="rotate(-60.00 338.4 499.6)"/><rect x="351.80" y="499.12" width="5.2" height="0.96" fill="#0000ff" opacity="0.78" transform="rotate(-52.50 338.4 499.6)"/><rect x="351.80" y="499.12" width="5.2" height="0.96" fill="#8b0000" opacity="0.78" transform="rotate(-45.00 338.4 499.6)"/><rect x="351.80" y="499.12" width="5.2" height="0.96" fill="#8b0000" opacity="0.78" transform="rotate(-37.50 338.4 499.6)"/><rect x="351.80" y="499.12" width="5.2" height="0.96" fill="#00ff00" opacity="0.78" transform="rotate(-30.00 338.4 499.6)"/><rect x="351.80" y="499.12" width="5.2" height="0.96" fill="#00ff00" opacity="0.78" transform="rotate(-22.50 338.4 499.6)"/><rect x="351.80" y="499.12" width="5.2" height="0.96" fill="#00008b" opacity="0.78" transform="rotate(-15.00 338.4 499.6)"/><rect x="351.80" y="499.12" width="5.2" height="0.96" fill="#00008b" opacity="0.78" transform="rotate(-7.50 338.4 499.6)"/><rect x="351.80" y="499.12" width="5.2" height="0.96" fill="#ff0000" opacity="0.78" transform="rotate(-0.00 338.4 499.6)"/><rect x="351.80" y="499.12" width="5.2" height="0.96" fill="#ff0000" opacity="0.78" transform="rotate(7.50 338.4 499.6)"/><rect x="351.80" y="499.12" width="5.2" height="0.96" fill="#008b00" opacity="0.78" transform="rotate(15.00 338.4 499.6)"/><rect x="351.80" y="499.12" width="5.2" height="0.96" fill="#008b00" opacity="0.78" transform="rotate(22.50 338.4 499.6)"/><rect x="351.80" y="499.12" width="5.2" height="0.96" fill="#0000ff" opacity="0.78" transform="rotate(30.00 338.4 499.6)"/><rect x="351.80" y="499.12" width="5.2" height="0.96" fill="#0000ff" opacity="0.78" transform="rotate(37.50 338.4 499.6)"/><rect x="351.80" y="499.12" width="5.2" height="0.96" fill="#8b0000" opacity="0.78" transform="rotate(45.00 338.4 499.6)"/><rect x="351.80" y="499.12" width="5.2" height="0.96" fill="#8b0000" opacity="0.78" transform="rotate(52.50 338.4 499.6)"/><rect x="351.80" y="499.12" width="5.2" height="0.96" fill="#00ff00" opacity="0.78" transform="rotate(60.00 338.4 499.6)"/><rect x="351.80" y="499.12" width="5.2" height="0.96" fill="#00ff00" opacity="0.78" transform="rotate(67.50 338.4 499.6)"/><rect x="351.80" y="499.12" width="5.2" height="0.96" fill="#00008b" opacity="0.78" transform="rotate(75.00 338.4 499.6)"/><rect x="351.80" y="499.12" width="5.2" height="0.96" fill="#00008b" opacity="0.78" transform="rotate(82.50 338.4 499.6)"/><rect x="351.80" y="499.12" width="5.2" height="0.96" fill="#ff0000" opacity="0.78" transform="rotate(90.00 338.4 499.6)"/><rect x="351.80" y="499.12" width="5.2" height="0.96" fill="#ff0000" opacity="0.78" transform="rotate(97.50 338.4 499.6)"/><rect x="351.80" y="499.12" width="5.2" height="0.96" fill="#008b00" opacity="0.78" transform="rotate(105.00 338.4 499.6)"/><rect x="351.80" y="499.12" width="5.2" height="0.96" fill="#008b00" opacity="0.78" transform="rotate(112.50 338.4 499.6)"/><rect x="351.80" y="499.12" width="5.2" height="0.96" fill="#0000ff" opacity="0.78" transform="rotate(120.00 338.4 499.6)"/><rect x="351.80" y="499.12" width="5.2" height="0.96" fill="#0000ff" opacity="0.78" transform="rotate(127.50 338.4 499.6)"/><rect x="351.80" y="499.12" width="5.2" height="0.96" fill="#8b0000" opacity="0.78" transform="rotate(135.00 338.4 499.6)"/><rect x="351.80" y="499.12" width="5.2" height="0.96" fill="#8b0000" opacity="0.78" transform="rotate(142.50 338.4 499.6)"/><rect x="351.80" y="499.12" width="5.2" height="0.96" fill="#00ff00" opacity="0.78" transform="rotate(150.00 338.4 499.6)"/><rect x="351.80" y="499.12" width="5.2" height="0.96" fill="#00ff00" opacity="0.78" transform="rotate(157.50 338.4 499.6)"/><rect x="351.80" y="499.12" width="5.2" height="0.96" fill="#00008b" opacity="0.78" transform="rotate(165.00 338.4 499.6)"/><rect x="351.80" y="499.12" width="5.2" height="0.96" fill="#00008b" opacity="0.78" transform="rotate(172.50 338.4 499.6)"/><rect x="351.80" y="499.12" width="5.2" height="0.96" fill="#ff0000" opacity="0.78" transform="rotate(180.00 338.4 499.6)"/><rect x="351.80" y="499.12" width="5.2" height="0.96" fill="#ff0000" opacity="0.78" transform="rotate(187.50 338.4 499.6)"/><rect x="351.80" y="499.12" width="5.2" height="0.96" fill="#008b00" opacity="0.78" transform="rotate(195.00 338.4 499.6)"/><rect x="351.80" y="499.12" width="5.2" height="0.96" fill="#008b00" opacity="0.78" transform="rotate(202.50 338.4 499.6)"/><rect x="351.80" y="499.12" width="5.2" height="0.96" fill="#0000ff" opacity="0.78" transform="rotate(210.00 338.4 499.6)"/><rect x="351.80" y="499.12" width="5.2" height="0.96" fill="#0000ff" opacity="0.78" transform="rotate(217.50 338.4 499.6)"/><rect x="351.80" y="499.12" width="5.2" height="0.96" fill="#8b0000" opacity="0.78" transform="rotate(225.00 338.4 499.6)"/><rect x="351.80" y="499.12" width="5.2" height="0.96" fill="#8b0000" opacity="0.78" transform="rotate(232.50 338.4 499.6)"/><rect x="351.80" y="499.12" width="5.2" height="0.96" fill="#00ff00" opacity="0.78" transform="rotate(240.00 338.4 499.6)"/><rect x="351.80" y="499.12" width="5.2" height="0.96" fill="#00ff00" opacity="0.78" transform="rotate(247.50 338.4 499.6)"/><rect x="351.80" y="499.12" width="5.2" height="0.96" fill="#00008b" opacity="0.78" transform="rotate(255.00 338.4 499.6)"/><rect x="351.80" y="499.12" width="5.2" height="0.96" fill="#00008b" opacity="0.78" transform="rotate(262.50 338.4 499.6)"/><circle cx="338.4" cy="499.6" r="12.9" fill="none" stroke="#abc" stroke-width="0.45"/><g transform="rotate(-22.50 338.4 499.6)"><path d="M350.50 496.30 Q346.70 499.60 350.50 502.90" stroke="#ff7f1a" stroke-width="1.25" fill="none"/></g><g transform="rotate(-67.50 338.4 499.6)"><path d="M350.50 496.30 Q346.70 499.60 350.50 502.90" stroke="#ffc04a" stroke-width="1.25" fill="none"/></g><g transform="rotate(-112.50 338.4 499.6)"><path d="M350.50 496.30 Q346.70 499.60 350.50 502.90" stroke="#ff7f1a" stroke-width="1.25" fill="none"/></g><g transform="rotate(-157.50 338.4 499.6)"><path d="M350.50 496.30 Q346.70 499.60 350.50 502.90" stroke="#ffc04a" stroke-width="1.25" fill="none"/></g><g transform="rotate(-202.50 338.4 499.6)"><path d="M350.50 496.30 Q346.70 499.60 350.50 502.90" stroke="#ff7f1a" stroke-width="1.25" fill="none"/></g><g transform="rotate(-247.50 338.4 499.6)"><path d="M350.50 496.30 Q346.70 499.60 350.50 502.90" stroke="#ffc04a" stroke-width="1.25" fill="none"/></g><g transform="rotate(-292.50 338.4 499.6)"><path d="M350.50 496.30 Q346.70 499.60 350.50 502.90" stroke="#ff7f1a" stroke-width="1.25" fill="none"/></g><g transform="rotate(-337.50 338.4 499.6)"><path d="M350.50 496.30 Q346.70 499.60 350.50 502.90" stroke="#ffc04a" stroke-width="1.25" fill="none"/></g><circle cx="338.4" cy="499.6" r="8.7" fill="#bfefff"/><circle cx="415.1" cy="499.6" r="21.8" fill="#666"/><rect x="428.50" y="499.12" width="5.2" height="0.96" fill="#ff0000" opacity="0.78" transform="rotate(-90.00 415.1 499.6)"/><rect x="428.50" y="499.12" width="5.2" height="0.96" fill="#ff0000" opacity="0.78" transform="rotate(-82.50 415.1 499.6)"/><rect x="428.50" y="499.12" width="5.2" height="0.96" fill="#008b00" opacity="0.78" transform="rotate(-75.00 415.1 499.6)"/><rect x="428.50" y="499.12" width="5.2" height="0.96" fill="#008b00" opacity="0.78" transform="rotate(-67.50 415.1 499.6)"/><rect x="428.50" y="499.12" width="5.2" height="0.96" fill="#0000ff" opacity="0.78" transform="rotate(-60.00 415.1 499.6)"/><rect x="428.50" y="499.12" width="5.2" height="0.96" fill="#0000ff" opacity="0.78" transform="rotate(-52.50 415.1 499.6)"/><rect x="428.50" y="499.12" width="5.2" height="0.96" fill="#8b0000" opacity="0.78" transform="rotate(-45.00 415.1 499.6)"/><rect x="428.50" y="499.12" width="5.2" height="0.96" fill="#8b0000" opacity="0.78" transform="rotate(-37.50 415.1 499.6)"/><rect x="428.50" y="499.12" width="5.2" height="0.96" fill="#00ff00" opacity="0.78" transform="rotate(-30.00 415.1 499.6)"/><rect x="428.50" y="499.12" width="5.2" height="0.96" fill="#00ff00" opacity="0.78" transform="rotate(-22.50 415.1 499.6)"/><rect x="428.50" y="499.12" width="5.2" height="0.96" fill="#00008b" opacity="0.78" transform="rotate(-15.00 415.1 499.6)"/><rect x="428.50" y="499.12" width="5.2" height="0.96" fill="#00008b" opacity="0.78" transform="rotate(-7.50 415.1 499.6)"/><rect x="428.50" y="499.12" width="5.2" height="0.96" fill="#ff0000" opacity="0.78" transform="rotate(-0.00 415.1 499.6)"/><rect x="428.50" y="499.12" width="5.2" height="0.96" fill="#ff0000" opacity="0.78" transform="rotate(7.50 415.1 499.6)"/><rect x="428.50" y="499.12" width="5.2" height="0.96" fill="#008b00" opacity="0.78" transform="rotate(15.00 415.1 499.6)"/><rect x="428.50" y="499.12" width="5.2" height="0.96" fill="#008b00" opacity="0.78" transform="rotate(22.50 415.1 499.6)"/><rect x="428.50" y="499.12" width="5.2" height="0.96" fill="#0000ff" opacity="0.78" transform="rotate(30.00 415.1 499.6)"/><rect x="428.50" y="499.12" width="5.2" height="0.96" fill="#0000ff" opacity="0.78" transform="rotate(37.50 415.1 499.6)"/><rect x="428.50" y="499.12" width="5.2" height="0.96" fill="#8b0000" opacity="0.78" transform="rotate(45.00 415.1 499.6)"/><rect x="428.50" y="499.12" width="5.2" height="0.96" fill="#8b0000" opacity="0.78" transform="rotate(52.50 415.1 499.6)"/><rect x="428.50" y="499.12" width="5.2" height="0.96" fill="#00ff00" opacity="0.78" transform="rotate(60.00 415.1 499.6)"/><rect x="428.50" y="499.12" width="5.2" height="0.96" fill="#00ff00" opacity="0.78" transform="rotate(67.50 415.1 499.6)"/><rect x="428.50" y="499.12" width="5.2" height="0.96" fill="#00008b" opacity="0.78" transform="rotate(75.00 415.1 499.6)"/><rect x="428.50" y="499.12" width="5.2" height="0.96" fill="#00008b" opacity="0.78" transform="rotate(82.50 415.1 499.6)"/><rect x="428.50" y="499.12" width="5.2" height="0.96" fill="#ff0000" opacity="0.78" transform="rotate(90.00 415.1 499.6)"/><rect x="428.50" y="499.12" width="5.2" height="0.96" fill="#ff0000" opacity="0.78" transform="rotate(97.50 415.1 499.6)"/><rect x="428.50" y="499.12" width="5.2" height="0.96" fill="#008b00" opacity="0.78" transform="rotate(105.00 415.1 499.6)"/><rect x="428.50" y="499.12" width="5.2" height="0.96" fill="#008b00" opacity="0.78" transform="rotate(112.50 415.1 499.6)"/><rect x="428.50" y="499.12" width="5.2" height="0.96" fill="#0000ff" opacity="0.78" transform="rotate(120.00 415.1 499.6)"/><rect x="428.50" y="499.12" width="5.2" height="0.96" fill="#0000ff" opacity="0.78" transform="rotate(127.50 415.1 499.6)"/><rect x="428.50" y="499.12" width="5.2" height="0.96" fill="#8b0000" opacity="0.78" transform="rotate(135.00 415.1 499.6)"/><rect x="428.50" y="499.12" width="5.2" height="0.96" fill="#8b0000" opacity="0.78" transform="rotate(142.50 415.1 499.6)"/><rect x="428.50" y="499.12" width="5.2" height="0.96" fill="#00ff00" opacity="0.78" transform="rotate(150.00 415.1 499.6)"/><rect x="428.50" y="499.12" width="5.2" height="0.96" fill="#00ff00" opacity="0.78" transform="rotate(157.50 415.1 499.6)"/><rect x="428.50" y="499.12" width="5.2" height="0.96" fill="#00008b" opacity="0.78" transform="rotate(165.00 415.1 499.6)"/><rect x="428.50" y="499.12" width="5.2" height="0.96" fill="#00008b" opacity="0.78" transform="rotate(172.50 415.1 499.6)"/><rect x="428.50" y="499.12" width="5.2" height="0.96" fill="#ff0000" opacity="0.78" transform="rotate(180.00 415.1 499.6)"/><rect x="428.50" y="499.12" width="5.2" height="0.96" fill="#ff0000" opacity="0.78" transform="rotate(187.50 415.1 499.6)"/><rect x="428.50" y="499.12" width="5.2" height="0.96" fill="#008b00" opacity="0.78" transform="rotate(195.00 415.1 499.6)"/><rect x="428.50" y="499.12" width="5.2" height="0.96" fill="#008b00" opacity="0.78" transform="rotate(202.50 415.1 499.6)"/><rect x="428.50" y="499.12" width="5.2" height="0.96" fill="#0000ff" opacity="0.78" transform="rotate(210.00 415.1 499.6)"/><rect x="428.50" y="499.12" width="5.2" height="0.96" fill="#0000ff" opacity="0.78" transform="rotate(217.50 415.1 499.6)"/><rect x="428.50" y="499.12" width="5.2" height="0.96" fill="#8b0000" opacity="0.78" transform="rotate(225.00 415.1 499.6)"/><rect x="428.50" y="499.12" width="5.2" height="0.96" fill="#8b0000" opacity="0.78" transform="rotate(232.50 415.1 499.6)"/><rect x="428.50" y="499.12" width="5.2" height="0.96" fill="#00ff00" opacity="0.78" transform="rotate(240.00 415.1 499.6)"/><rect x="428.50" y="499.12" width="5.2" height="0.96" fill="#00ff00" opacity="0.78" transform="rotate(247.50 415.1 499.6)"/><rect x="428.50" y="499.12" width="5.2" height="0.96" fill="#00008b" opacity="0.78" transform="rotate(255.00 415.1 499.6)"/><rect x="428.50" y="499.12" width="5.2" height="0.96" fill="#00008b" opacity="0.78" transform="rotate(262.50 415.1 499.6)"/><circle cx="415.1" cy="499.6" r="12.9" fill="none" stroke="#abc" stroke-width="0.45"/><g transform="rotate(-22.50 415.1 499.6)"><path d="M427.20 496.30 Q423.40 499.60 427.20 502.90" stroke="#ff7f1a" stroke-width="1.25" fill="none"/></g><g transform="rotate(-67.50 415.1 499.6)"><path d="M427.20 496.30 Q423.40 499.60 427.20 502.90" stroke="#ffc04a" stroke-width="1.25" fill="none"/></g><g transform="rotate(-112.50 415.1 499.6)"><path d="M427.20 496.30 Q423.40 499.60 427.20 502.90" stroke="#ff7f1a" stroke-width="1.25" fill="none"/></g><g transform="rotate(-157.50 415.1 499.6)"><path d="M427.20 496.30 Q423.40 499.60 427.20 502.90" stroke="#ffc04a" stroke-width="1.25" fill="none"/></g><g transform="rotate(-202.50 415.1 499.6)"><path d="M427.20 496.30 Q423.40 499.60 427.20 502.90" stroke="#ff7f1a" stroke-width="1.25" fill="none"/></g><g transform="rotate(-247.50 415.1 499.6)"><path d="M427.20 496.30 Q423.40 499.60 427.20 502.90" stroke="#ffc04a" stroke-width="1.25" fill="none"/></g><g transform="rotate(-292.50 415.1 499.6)"><path d="M427.20 496.30 Q423.40 499.60 427.20 502.90" stroke="#ff7f1a" stroke-width="1.25" fill="none"/></g><g transform="rotate(-337.50 415.1 499.6)"><path d="M427.20 496.30 Q423.40 499.60 427.20 502.90" stroke="#ffc04a" stroke-width="1.25" fill="none"/></g><circle cx="415.1" cy="499.6" r="9.2" fill="#bfefff"/><circle cx="491.8" cy="499.6" r="21.8" fill="#666"/><rect x="505.20" y="499.12" width="5.2" height="0.96" fill="#ff0000" opacity="0.78" transform="rotate(-90.00 491.8 499.6)"/><rect x="505.20" y="499.12" width="5.2" height="0.96" fill="#ff0000" opacity="0.78" transform="rotate(-82.50 491.8 499.6)"/><rect x="505.20" y="499.12" width="5.2" height="0.96" fill="#008b00" opacity="0.78" transform="rotate(-75.00 491.8 499.6)"/><rect x="505.20" y="499.12" width="5.2" height="0.96" fill="#008b00" opacity="0.78" transform="rotate(-67.50 491.8 499.6)"/><rect x="505.20" y="499.12" width="5.2" height="0.96" fill="#0000ff" opacity="0.78" transform="rotate(-60.00 491.8 499.6)"/><rect x="505.20" y="499.12" width="5.2" height="0.96" fill="#0000ff" opacity="0.78" transform="rotate(-52.50 491.8 499.6)"/><rect x="505.20" y="499.12" width="5.2" height="0.96" fill="#8b0000" opacity="0.78" transform="rotate(-45.00 491.8 499.6)"/><rect x="505.20" y="499.12" width="5.2" height="0.96" fill="#8b0000" opacity="0.78" transform="rotate(-37.50 491.8 499.6)"/><rect x="505.20" y="499.12" width="5.2" height="0.96" fill="#00ff00" opacity="0.78" transform="rotate(-30.00 491.8 499.6)"/><rect x="505.20" y="499.12" width="5.2" height="0.96" fill="#00ff00" opacity="0.78" transform="rotate(-22.50 491.8 499.6)"/><rect x="505.20" y="499.12" width="5.2" height="0.96" fill="#00008b" opacity="0.78" transform="rotate(-15.00 491.8 499.6)"/><rect x="505.20" y="499.12" width="5.2" height="0.96" fill="#00008b" opacity="0.78" transform="rotate(-7.50 491.8 499.6)"/><rect x="505.20" y="499.12" width="5.2" height="0.96" fill="#ff0000" opacity="0.78" transform="rotate(-0.00 491.8 499.6)"/><rect x="505.20" y="499.12" width="5.2" height="0.96" fill="#ff0000" opacity="0.78" transform="rotate(7.50 491.8 499.6)"/><rect x="505.20" y="499.12" width="5.2" height="0.96" fill="#008b00" opacity="0.78" transform="rotate(15.00 491.8 499.6)"/><rect x="505.20" y="499.12" width="5.2" height="0.96" fill="#008b00" opacity="0.78" transform="rotate(22.50 491.8 499.6)"/><rect x="505.20" y="499.12" width="5.2" height="0.96" fill="#0000ff" opacity="0.78" transform="rotate(30.00 491.8 499.6)"/><rect x="505.20" y="499.12" width="5.2" height="0.96" fill="#0000ff" opacity="0.78" transform="rotate(37.50 491.8 499.6)"/><rect x="505.20" y="499.12" width="5.2" height="0.96" fill="#8b0000" opacity="0.78" transform="rotate(45.00 491.8 499.6)"/><rect x="505.20" y="499.12" width="5.2" height="0.96" fill="#8b0000" opacity="0.78" transform="rotate(52.50 491.8 499.6)"/><rect x="505.20" y="499.12" width="5.2" height="0.96" fill="#00ff00" opacity="0.78" transform="rotate(60.00 491.8 499.6)"/><rect x="505.20" y="499.12" width="5.2" height="0.96" fill="#00ff00" opacity="0.78" transform="rotate(67.50 491.8 499.6)"/><rect x="505.20" y="499.12" width="5.2" height="0.96" fill="#00008b" opacity="0.78" transform="rotate(75.00 491.8 499.6)"/><rect x="505.20" y="499.12" width="5.2" height="0.96" fill="#00008b" opacity="0.78" transform="rotate(82.50 491.8 499.6)"/><rect x="505.20" y="499.12" width="5.2" height="0.96" fill="#ff0000" opacity="0.78" transform="rotate(90.00 491.8 499.6)"/><rect x="505.20" y="499.12" width="5.2" height="0.96" fill="#ff0000" opacity="0.78" transform="rotate(97.50 491.8 499.6)"/><rect x="505.20" y="499.12" width="5.2" height="0.96" fill="#008b00" opacity="0.78" transform="rotate(105.00 491.8 499.6)"/><rect x="505.20" y="499.12" width="5.2" height="0.96" fill="#008b00" opacity="0.78" transform="rotate(112.50 491.8 499.6)"/><rect x="505.20" y="499.12" width="5.2" height="0.96" fill="#0000ff" opacity="0.78" transform="rotate(120.00 491.8 499.6)"/><rect x="505.20" y="499.12" width="5.2" height="0.96" fill="#0000ff" opacity="0.78" transform="rotate(127.50 491.8 499.6)"/><rect x="505.20" y="499.12" width="5.2" height="0.96" fill="#8b0000" opacity="0.78" transform="rotate(135.00 491.8 499.6)"/><rect x="505.20" y="499.12" width="5.2" height="0.96" fill="#8b0000" opacity="0.78" transform="rotate(142.50 491.8 499.6)"/><rect x="505.20" y="499.12" width="5.2" height="0.96" fill="#00ff00" opacity="0.78" transform="rotate(150.00 491.8 499.6)"/><rect x="505.20" y="499.12" width="5.2" height="0.96" fill="#00ff00" opacity="0.78" transform="rotate(157.50 491.8 499.6)"/><rect x="505.20" y="499.12" width="5.2" height="0.96" fill="#00008b" opacity="0.78" transform="rotate(165.00 491.8 499.6)"/><rect x="505.20" y="499.12" width="5.2" height="0.96" fill="#00008b" opacity="0.78" transform="rotate(172.50 491.8 499.6)"/><rect x="505.20" y="499.12" width="5.2" height="0.96" fill="#ff0000" opacity="0.78" transform="rotate(180.00 491.8 499.6)"/><rect x="505.20" y="499.12" width="5.2" height="0.96" fill="#ff0000" opacity="0.78" transform="rotate(187.50 491.8 499.6)"/><rect x="505.20" y="499.12" width="5.2" height="0.96" fill="#008b00" opacity="0.78" transform="rotate(195.00 491.8 499.6)"/><rect x="505.20" y="499.12" width="5.2" height="0.96" fill="#008b00" opacity="0.78" transform="rotate(202.50 491.8 499.6)"/><rect x="505.20" y="499.12" width="5.2" height="0.96" fill="#0000ff" opacity="0.78" transform="rotate(210.00 491.8 499.6)"/><rect x="505.20" y="499.12" width="5.2" height="0.96" fill="#0000ff" opacity="0.78" transform="rotate(217.50 491.8 499.6)"/><rect x="505.20" y="499.12" width="5.2" height="0.96" fill="#8b0000" opacity="0.78" transform="rotate(225.00 491.8 499.6)"/><rect x="505.20" y="499.12" width="5.2" height="0.96" fill="#8b0000" opacity="0.78" transform="rotate(232.50 491.8 499.6)"/><rect x="505.20" y="499.12" width="5.2" height="0.96" fill="#00ff00" opacity="0.78" transform="rotate(240.00 491.8 499.6)"/><rect x="505.20" y="499.12" width="5.2" height="0.96" fill="#00ff00" opacity="0.78" transform="rotate(247.50 491.8 499.6)"/><rect x="505.20" y="499.12" width="5.2" height="0.96" fill="#00008b" opacity="0.78" transform="rotate(255.00 491.8 499.6)"/><rect x="505.20" y="499.12" width="5.2" height="0.96" fill="#00008b" opacity="0.78" transform="rotate(262.50 491.8 499.6)"/><circle cx="491.8" cy="499.6" r="12.9" fill="none" stroke="#abc" stroke-width="0.45"/><g transform="rotate(-22.50 491.8 499.6)"><path d="M503.90 496.30 Q500.10 499.60 503.90 502.90" stroke="#ff7f1a" stroke-width="1.25" fill="none"/></g><g transform="rotate(-67.50 491.8 499.6)"><path d="M503.90 496.30 Q500.10 499.60 503.90 502.90" stroke="#ffc04a" stroke-width="1.25" fill="none"/></g><g transform="rotate(-112.50 491.8 499.6)"><path d="M503.90 496.30 Q500.10 499.60 503.90 502.90" stroke="#ff7f1a" stroke-width="1.25" fill="none"/></g><g transform="rotate(-157.50 491.8 499.6)"><path d="M503.90 496.30 Q500.10 499.60 503.90 502.90" stroke="#ffc04a" stroke-width="1.25" fill="none"/></g><g transform="rotate(-202.50 491.8 499.6)"><path d="M503.90 496.30 Q500.10 499.60 503.90 502.90" stroke="#ff7f1a" stroke-width="1.25" fill="none"/></g><g transform="rotate(-247.50 491.8 499.6)"><path d="M503.90 496.30 Q500.10 499.60 503.90 502.90" stroke="#ffc04a" stroke-width="1.25" fill="none"/></g><g transform="rotate(-292.50 491.8 499.6)"><path d="M503.90 496.30 Q500.10 499.60 503.90 502.90" stroke="#ff7f1a" stroke-width="1.25" fill="none"/></g><g transform="rotate(-337.50 491.8 499.6)"><path d="M503.90 496.30 Q500.10 499.60 503.90 502.90" stroke="#ffc04a" stroke-width="1.25" fill="none"/></g><circle cx="491.8" cy="499.6" r="9.2" fill="#bfefff"/></svg>
<span style="left:236.23px;top:524.11px;font-size:9.5px;line-height:14px;color:#fff;transform:scaleX(0.9100);">Accord_2005</span>
<span style="left:313.65px;top:524.11px;font-size:9.5px;line-height:14px;color:#1a1a1a;transform:scaleX(0.9100);">Camry_2007</span>
<span style="left:393.23px;top:524.11px;font-size:9.5px;line-height:14px;color:#1a1a1a;transform:scaleX(0.9100);">Prius_2004</span>
<span style="left:469.93px;top:524.11px;font-size:9.5px;line-height:14px;color:#1a1a1a;transform:scaleX(0.9100);">Prius_2010</span>
<span style="left:969.40px;top:100.36px;font-size:10.5px;line-height:14px;color:#fff;transform:scaleX(0.9841);-webkit-text-stroke:0.4px #fff;">GENERAL DATA</span>
<span style="left:1078.00px;top:100.36px;font-size:10.5px;line-height:14px;color:#111;transform:scaleX(0.9305);-webkit-text-stroke:0.4px #111;">PERFORMANCE</span>
<span style="left:959.40px;top:137.61px;font-size:9.5px;line-height:14px;color:#1a1a1a;">Motor</span>
<span style="left:1062.70px;top:137.61px;font-size:9.5px;line-height:14px;color:#1a1a1a;transform:scaleX(0.9163);">Accord_2005</span>
<span style="left:959.40px;top:151.11px;font-size:9.5px;line-height:14px;color:#1a1a1a;transform:scaleX(0.9406);">Catalog</span>
<span style="left:1062.70px;top:151.11px;font-size:9.5px;line-height:14px;color:#1a1a1a;transform:scaleX(0.9501);">Automotive_Transport_1</span>
<span style="left:959.40px;top:164.61px;font-size:9.5px;line-height:14px;color:#1a1a1a;transform:scaleX(0.9509);">Family</span>
<span style="left:1062.70px;top:164.61px;font-size:9.5px;line-height:14px;color:#1a1a1a;transform:scaleX(0.9594);">Synchronous</span>
<span style="left:959.40px;top:178.11px;font-size:9.5px;line-height:14px;color:#1a1a1a;transform:scaleX(0.9710);">Type</span>
<span style="left:1062.70px;top:178.11px;font-size:9.5px;line-height:14px;color:#1a1a1a;transform:scaleX(0.9802);">Permanent magnet</span>
<span style="left:959.40px;top:191.61px;font-size:9.5px;line-height:14px;color:#1a1a1a;transform:scaleX(0.9625);">Sub-type</span>
<span style="left:1062.70px;top:191.61px;font-size:9.5px;line-height:14px;color:#1a1a1a;transform:scaleX(1.0153);">Inner rotor</span>
<span style="left:959.40px;top:205.11px;font-size:9.5px;line-height:14px;color:#1a1a1a;transform:scaleX(0.9722);">Elec. supply network</span>
<span style="left:1062.70px;top:205.11px;font-size:9.5px;line-height:14px;color:#1a1a1a;transform:scaleX(0.9093);">3Phase</span>
<span style="left:1025.15px;top:124.13px;font-size:10px;line-height:14px;color:#1a1a1a;transform:scaleX(0.8896);">CLASSIFICATION</span>
<span style="left:959.40px;top:240.71px;font-size:9.5px;line-height:14px;color:#1a1a1a;transform:scaleX(0.9960);">Outer diameter (mm)</span>
<span style="left:1062.70px;top:240.71px;font-size:9.5px;line-height:14px;color:#1a1a1a;transform:scaleX(0.9296);">315.5</span>
<span style="left:959.40px;top:254.21px;font-size:9.5px;line-height:14px;color:#1a1a1a;">Inner diameter (mm)</span>
<span style="left:1062.70px;top:254.21px;font-size:9.5px;line-height:14px;color:#1a1a1a;transform:scaleX(0.9296);">232.0</span>
<span style="left:959.40px;top:267.71px;font-size:9.5px;line-height:14px;color:#1a1a1a;transform:scaleX(0.9693);">Length (mm)</span>
<span style="left:1062.70px;top:267.71px;font-size:9.5px;line-height:14px;color:#1a1a1a;transform:scaleX(0.8924);">40.1</span>
<span style="left:959.40px;top:281.21px;font-size:9.5px;line-height:14px;color:#1a1a1a;transform:scaleX(0.9660);">No. slots</span>
<span style="left:1062.70px;top:281.21px;font-size:9.5px;line-height:14px;color:#1a1a1a;transform:scaleX(0.8990);">24</span>
<span style="left:959.40px;top:294.71px;font-size:9.5px;line-height:14px;color:#1a1a1a;">Library</span>
<span style="left:1062.70px;top:294.71px;font-size:9.5px;line-height:14px;color:#1a1a1a;transform:scaleX(0.9366);">os_PllTooth</span>
<span style="left:959.40px;top:308.21px;font-size:9.5px;line-height:14px;color:#1a1a1a;transform:scaleX(0.9470);">Part</span>
<span style="left:1062.70px;top:308.21px;font-size:9.5px;line-height:14px;color:#1a1a1a;transform:scaleX(0.9116);">os_PllTooth_01A</span>
<span style="left:959.40px;top:321.71px;font-size:9.5px;line-height:14px;color:#1a1a1a;transform:scaleX(1.0210);">Material</span>
<span style="left:1062.70px;top:321.71px;font-size:9.5px;line-height:14px;color:#1a1a1a;transform:scaleX(0.8882);">REF.M330_35A</span>
<span style="left:959.40px;top:335.21px;font-size:9.5px;line-height:14px;color:#1a1a1a;transform:scaleX(0.9918);">Conductor material</span>
<span style="left:1062.70px;top:335.21px;font-size:9.5px;line-height:14px;color:#1a1a1a;transform:scaleX(0.9083);">REF.Copper</span>
<span style="left:1043.10px;top:227.24px;font-size:10px;line-height:14px;color:#1a1a1a;transform:scaleX(0.9410);">STATOR</span>
<span style="left:959.40px;top:370.81px;font-size:9.5px;line-height:14px;color:#1a1a1a;transform:scaleX(0.9693);">Length (mm)</span>
<span style="left:1062.70px;top:370.81px;font-size:9.5px;line-height:14px;color:#1a1a1a;transform:scaleX(0.9314);">1.0</span>
<span style="left:1044.35px;top:357.34px;font-size:10px;line-height:14px;color:#1a1a1a;transform:scaleX(0.9024);">AIRGAP</span>
<span style="left:959.40px;top:406.41px;font-size:9.5px;line-height:14px;color:#1a1a1a;transform:scaleX(0.9960);">Outer diameter (mm)</span>
<span style="left:1062.70px;top:406.41px;font-size:9.5px;line-height:14px;color:#1a1a1a;transform:scaleX(0.9296);">230.0</span>
<span style="left:959.40px;top:419.91px;font-size:9.5px;line-height:14px;color:#1a1a1a;">Inner diameter (mm)</span>
<span style="left:1062.70px;top:419.91px;font-size:9.5px;line-height:14px;color:#1a1a1a;transform:scaleX(0.9296);">188.0</span>
<span style="left:959.40px;top:433.41px;font-size:9.5px;line-height:14px;color:#1a1a1a;transform:scaleX(0.9693);">Length (mm)</span>
<span style="left:1062.70px;top:433.41px;font-size:9.5px;line-height:14px;color:#1a1a1a;transform:scaleX(0.8924);">40.1</span>
<span style="left:959.40px;top:446.91px;font-size:9.5px;line-height:14px;color:#1a1a1a;transform:scaleX(0.9692);">No. poles</span>
<span style="left:1062.70px;top:446.91px;font-size:9.5px;line-height:14px;color:#1a1a1a;transform:scaleX(0.8801);">16</span>
<span style="left:959.40px;top:460.41px;font-size:9.5px;line-height:14px;color:#1a1a1a;">Library</span>
<span style="left:1062.70px;top:460.41px;font-size:9.5px;line-height:14px;color:#1a1a1a;transform:scaleX(0.9109);">imi_VBlock</span>
<span style="left:959.40px;top:473.91px;font-size:9.5px;line-height:14px;color:#1a1a1a;transform:scaleX(0.9470);">Part</span>
<span style="left:1062.70px;top:473.91px;font-size:9.5px;line-height:14px;color:#1a1a1a;transform:scaleX(0.8891);">imi_VBlock_01A</span>
<span style="left:959.40px;top:487.41px;font-size:9.5px;line-height:14px;color:#1a1a1a;transform:scaleX(1.0210);">Material</span>
<span style="left:1062.70px;top:487.41px;font-size:9.5px;line-height:14px;color:#1a1a1a;transform:scaleX(0.8882);">REF.M330_35A</span>
<span style="left:959.40px;top:500.91px;font-size:9.5px;line-height:14px;color:#1a1a1a;">Magnet material</span>
<span style="left:1062.70px;top:500.91px;font-size:9.5px;line-height:14px;color:#1a1a1a;transform:scaleX(0.8787);">REF.NdFeB_1230_1400</span>
<span style="left:1045.40px;top:392.94px;font-size:10px;line-height:14px;color:#1a1a1a;transform:scaleX(0.8907);">ROTOR</span>
<span style="left:959.40px;top:536.51px;font-size:9.5px;line-height:14px;color:#1a1a1a;transform:scaleX(0.9729);">Topology</span>
<span style="left:1062.70px;top:536.51px;font-size:9.5px;line-height:14px;color:#1a1a1a;transform:scaleX(0.9731);">None</span>
<span style="left:959.40px;top:550.01px;font-size:9.5px;line-height:14px;color:#1a1a1a;transform:scaleX(1.0210);">Material</span>
<span style="left:1062.70px;top:550.01px;font-size:9.5px;line-height:14px;color:#1a1a1a;">-</span>
<span style="left:1047.00px;top:523.03px;font-size:10px;line-height:14px;color:#1a1a1a;transform:scaleX(0.8786);">SHAFT</span>
</body></html>
